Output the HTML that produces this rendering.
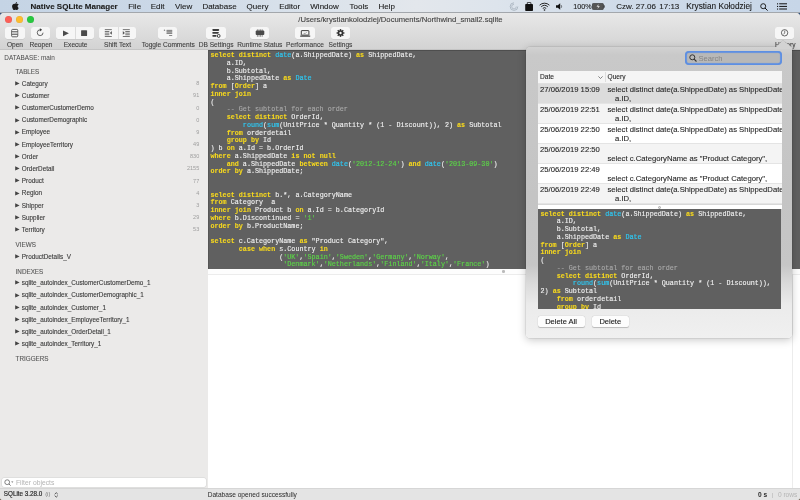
<!DOCTYPE html>
<html><head><meta charset="utf-8">
<style>
*{margin:0;padding:0;box-sizing:border-box}
html,body{width:800px;height:500px;overflow:hidden;background:linear-gradient(#34527a 0,#34527a 50%,#6b5a48 50%)}
body{position:relative;will-change:transform;font-family:"Liberation Sans",sans-serif;color:#222}
.a{position:absolute;white-space:nowrap}
#menubar{position:absolute;left:0;top:0;width:800px;height:12.5px;background:linear-gradient(to right,#c5d4e5 0%,#cbd8e7 20%,#dae2eb 38%,#e3e7ec 52%,#dde4ec 62%,#cfdbe9 78%,#c7d6e8 100%)}
#menubar .a{font-size:8px;line-height:12px;top:0.7px;color:#1a1a1a;-webkit-text-stroke:0.1px #1a1a1a}
#win{position:absolute;left:0;top:12.5px;width:800px;height:487.5px;background:#e0e0e0;border-radius:4px 4px 3px 3px;overflow:hidden}
#toolbar{position:absolute;left:0;top:0;width:800px;height:37px;background:linear-gradient(#e8e8e8,#d3d3d3);border-bottom:1px solid #c4c4c4}
.tl{position:absolute;top:3.2px;width:7px;height:7px;border-radius:50%;margin-left:0.2px;box-shadow:0 0 0 0.3px rgba(0,0,0,0.12) inset}
.btn{position:absolute;top:14.5px;height:12px;background:#f6f6f6;border-radius:2.5px;box-shadow:0 0.5px 0.5px rgba(0,0,0,0.12)}
.btn .dv{position:absolute;top:0;width:0.5px;height:12px;background:#dcdcdc}
.btn svg{position:absolute;left:0;top:0}
.lbl{position:absolute;top:28px;font-size:6.6px;line-height:8px;color:#404040;-webkit-text-stroke:0.1px #404040;white-space:nowrap}
#sidebar{position:absolute;left:0;top:37.5px;width:207.5px;height:438px;background:#ebeae9}
#sidebar .a{font-size:6.36px;line-height:8px;color:#262626}
#sidebar .i{left:21.8px;margin-top:0.5px;color:#383838;-webkit-text-stroke:0.1px #383838}
#sidebar .h{color:#5a5a5a;font-size:6.3px;left:15.6px;-webkit-text-stroke:0.12px #5a5a5a}
#sidebar .n{color:#9d9d9d;font-size:5.5px;text-align:right;right:8.3px}
#sidebar .t{position:absolute;left:15.8px;width:0;height:0;border-left:4.3px solid #444;border-top:2.2px solid transparent;border-bottom:2.2px solid transparent;margin-top:-0.2px;margin-left:-0.5px}
#filter{position:absolute;left:2px;top:427.5px;width:203.5px;height:9.3px;background:#fff;border-radius:2px;box-shadow:0 0 0 0.5px #d4d4d4}
#editor{position:absolute;left:207.5px;top:37.5px;width:592.5px;height:219px;background:#606060;border-left:1px solid #555;border-top:1px solid #4e4e4e;overflow:hidden}
pre{font-family:"Liberation Mono",monospace;font-size:6.745px;line-height:7.757px;color:#f2f2f2;-webkit-text-stroke:0.12px #f2f2f2;position:absolute;white-space:pre}
pre b{color:#f7d81e;-webkit-text-stroke:0.1px #f7d81e;font-weight:bold}
pre i{font-style:normal}
pre i.f{color:#2fc6f0;-webkit-text-stroke:0.2px #2fc6f0}
pre i.s{color:#5cd448;-webkit-text-stroke:0.15px #5cd448}
pre i.c{color:#ababab;-webkit-text-stroke:0.1px #ababab}
#split{position:absolute;left:207.5px;top:256.5px;width:592.5px;height:5.5px;background:#fdfdfd;border-bottom:0.8px solid #ececec}
#results{position:absolute;left:207.5px;top:262px;width:592.5px;height:213.5px;background:#fff}
#status{position:absolute;left:0;top:475.5px;width:800px;height:12px;background:#e4e4e4;border-top:1px solid #d6d6d6}
#status .a{font-size:6.58px;line-height:12px;top:-0.5px;color:#2a2a2a}
#pop{position:absolute;left:525.5px;top:46.5px;width:266px;height:291.5px;border-radius:4px 0 4px 4px;background:linear-gradient(#d2d2d2 0px,#c9c9c9 8px,#c4c4c4 150px,#c6c6c6 218px,#dadada 236px,#ebebeb 258px,#f0f0f0 292px);box-shadow:0 2px 8px rgba(0,0,0,0.22),0 0 0 0.5px rgba(0,0,0,0.12)}
#arrow{position:absolute;left:775.5px;top:39.5px}
#pop .a{font-size:7.7px;line-height:10px;color:#262626;-webkit-text-stroke:0.1px #262626}
#search{position:absolute;left:159px;top:4.3px;width:97.5px;height:14.3px;border-radius:4px;background:#b8b8b8;box-shadow:0 0 0 1.8px #5d8fe3 inset,0 0 0 2.3px rgba(93,143,227,0.25) inset}
#tbl{position:absolute;left:12px;top:24px;width:244px;height:133px;background:#fff;overflow:hidden}
.row{position:absolute;left:0;width:244px;height:20px;border-bottom:0.5px solid #e4e4e4}
#prev{position:absolute;left:12px;top:162px;width:243.5px;height:100px;background:#606060;overflow:hidden}
.pbtn{position:absolute;top:269.5px;height:10.8px;background:#fdfdfd;border-radius:2px;box-shadow:0 0.5px 0.8px rgba(0,0,0,0.2),0 0 0 0.3px rgba(0,0,0,0.08);font-size:7.5px;line-height:12.6px;text-align:center;color:#222;-webkit-text-stroke:0.12px #222}
</style></head><body>
<div id="menubar">
  <svg class="a" style="left:12.3px;top:1.6px" width="7" height="8.5" viewBox="0 0 16 19"><path d="M11.5 0c.1 1.2-.3 2.3-1 3.1-.7.8-1.7 1.4-2.8 1.3-.1-1.1.4-2.3 1.1-3C9.5.6 10.6.1 11.5 0zM14.8 6.2c-.1.1-2 1.2-2 3.5 0 2.7 2.4 3.6 2.5 3.7 0 .1-.4 1.3-1.3 2.6-.8 1.1-1.6 2.3-2.9 2.3s-1.6-.7-3-.7c-1.5 0-1.9.8-3.1.8S3 17.2 2.2 16.1C1.1 14.6.2 12 .2 9.6c0-3.9 2.5-5.9 5-5.9 1.3 0 2.4.9 3.2.9.8 0 2-.9 3.5-.9.6 0 2.6.1 3.9 2.5z" fill="#1b1b1b"/></svg>
  <div class="a" style="left:30.6px;font-weight:bold">Native SQLite Manager</div>
  <div class="a" style="left:128.2px">File</div>
  <div class="a" style="left:150.7px">Edit</div>
  <div class="a" style="left:175px">View</div>
  <div class="a" style="left:202.4px">Database</div>
  <div class="a" style="left:246.6px">Query</div>
  <div class="a" style="left:279.2px">Editor</div>
  <div class="a" style="left:310.3px">Window</div>
  <div class="a" style="left:349.6px">Tools</div>
  <div class="a" style="left:378.4px">Help</div>
  <!-- status icons -->
  <svg class="a" style="left:509px;top:2px" width="10" height="9" viewBox="0 0 10 9"><path d="M5 0.8A3.8 3.8 0 1 0 8.8 4.5" fill="none" stroke="#a9b4bf" stroke-width="0.9"/><path d="M5 2.3A2.3 2.3 0 1 0 7.3 4.5" fill="none" stroke="#a9b4bf" stroke-width="0.8"/></svg>
  <svg class="a" style="left:525.3px;top:1.8px" width="8.2" height="9" viewBox="0 0 8.2 9"><rect x="0.2" y="2" width="7.8" height="7" rx="0.8" fill="#111"/><rect x="2.3" y="0.4" width="3.6" height="2.4" rx="0.5" fill="none" stroke="#111" stroke-width="0.8"/></svg>
  <svg class="a" style="left:539.4px;top:2px" width="11" height="9" viewBox="0 0 11 9"><path d="M0.6 3.2A7 7 0 0 1 10.4 3.2" fill="none" stroke="#111" stroke-width="0.9"/><path d="M2.2 4.8A4.8 4.8 0 0 1 8.8 4.8" fill="none" stroke="#111" stroke-width="0.9"/><path d="M3.8 6.4A2.5 2.5 0 0 1 7.2 6.4" fill="none" stroke="#111" stroke-width="0.9"/><circle cx="5.5" cy="8" r="0.8" fill="#111"/></svg>
  <svg class="a" style="left:556px;top:3px" width="7" height="7" viewBox="0 0 7 7"><path d="M0 2.2H1.8L4.2 0.2V6.8L1.8 4.8H0Z" fill="#111"/><path d="M5.2 2.2Q6 3.5 5.2 4.8" fill="none" stroke="#111" stroke-width="0.6"/></svg>
  <div class="a" style="left:573.2px;font-size:7.2px">100%</div>
  <svg class="a" style="left:592px;top:3px" width="13" height="7" viewBox="0 0 13 7"><rect x="0.4" y="0.4" width="11" height="6.2" rx="1" fill="#555" stroke="#222" stroke-width="0.6"/><rect x="11.6" y="2.3" width="1" height="2.4" fill="#222"/><path d="M6.5 1L4.5 3.8H6.2L5.5 6L7.8 3H6.2Z" fill="#ddd"/></svg>
  <div class="a" style="left:616.3px">Czw. 27.06</div>
  <div class="a" style="left:659.3px">17:13</div>
  <div class="a" style="left:686.3px;font-size:8.25px">Krystian Kołodziej</div>
  <svg class="a" style="left:760px;top:2.5px" width="8" height="8" viewBox="0 0 8 8"><circle cx="3.2" cy="3.2" r="2.5" fill="none" stroke="#111" stroke-width="0.9"/><path d="M5 5L7.6 7.6" stroke="#111" stroke-width="1"/></svg>
  <svg class="a" style="left:777px;top:3px" width="10" height="7" viewBox="0 0 10 7"><g fill="#111"><rect x="0" y="0.3" width="1.1" height="1.1"/><rect x="0" y="2.9" width="1.1" height="1.1"/><rect x="0" y="5.5" width="1.1" height="1.1"/><rect x="2.2" y="0.3" width="7.8" height="1"/><rect x="2.2" y="2.9" width="7.8" height="1"/><rect x="2.2" y="5.5" width="7.8" height="1"/></g></svg>
</div>
<div class="a" style="left:0;top:11.7px;width:800px;height:1px;background:#a3a7ac"></div>
<div id="win">
  <div id="toolbar">
    <div class="tl" style="left:4.5px;background:#fc5f57"></div>
    <div class="tl" style="left:15.5px;background:#fdbc2e"></div>
    <div class="tl" style="left:26.5px;background:#28c840"></div>
    <div class="a" style="left:298.3px;top:3px;font-size:7.66px;line-height:8px;color:#404040;-webkit-text-stroke:0.1px #404040">/Users/krystiankolodziej/Documents/Northwind_small2.sqlite</div>
    <!-- Open -->
    <div class="btn" style="left:5px;width:19.5px"><svg width="19.5" height="12" viewBox="0 0 19.5 12"><rect x="6.65" y="2.4" width="6.1" height="7.4" rx="0.9" fill="none" stroke="#4f4f4f" stroke-width="0.9"/><path d="M6.8 4.6H12.6M6.8 7.5H12.6" stroke="#4f4f4f" stroke-width="0.8"/><rect x="7.1" y="5" width="5.2" height="2.1" fill="#c4c4c4"/></svg></div>
    <!-- Reopen -->
    <div class="btn" style="left:30.7px;width:19.3px"><svg width="19.3" height="12" viewBox="0 0 19.3 12"><path d="M12.05 5.7A2.9 2.9 0 1 1 9.15 2.8" fill="none" stroke="#4a4a4a" stroke-width="0.85"/><path d="M8.9 1.2L11.1 2.8L8.9 4.4Z" fill="#3a3a3a"/></svg></div>
    <!-- Execute -->
    <div class="btn" style="left:56px;width:37.7px"><div class="dv" style="left:19.3px"></div><svg width="37.7" height="12" viewBox="0 0 37.7 12"><path d="M7 3.5L12.9 6.35L7 9.2Z" fill="#4a4a4a"/><rect x="25.1" y="3.3" width="6" height="5.7" rx="0.5" fill="#4a4a4a"/></svg></div>
    <!-- Shift Text -->
    <div class="btn" style="left:99.2px;width:37.3px"><div class="dv" style="left:18.6px"></div><svg width="37.3" height="12" viewBox="0 0 37.3 12"><g fill="#555"><rect x="5.8" y="2.3" width="7" height="0.8"/><rect x="5.8" y="4" width="4.5" height="0.8"/><rect x="5.8" y="5.7" width="4.5" height="0.8"/><rect x="5.8" y="7.4" width="4.5" height="0.8"/><rect x="5.8" y="9" width="7" height="0.8"/><path d="M12.9 4L10.8 5.9L12.9 7.8Z"/></g><g fill="#555"><rect x="23.8" y="2.3" width="7" height="0.8"/><rect x="26.3" y="4" width="4.5" height="0.8"/><rect x="26.3" y="5.7" width="4.5" height="0.8"/><rect x="26.3" y="7.4" width="4.5" height="0.8"/><rect x="23.8" y="9" width="7" height="0.8"/><path d="M23.8 4L25.9 5.9L23.8 7.8Z"/></g></svg></div>
    <!-- Toggle Comments -->
    <div class="btn" style="left:157.8px;width:19.7px"><svg width="19.7" height="12" viewBox="0 0 19.7 12"><circle cx="6.5" cy="3.3" r="0.75" fill="#888"/><rect x="8.6" y="2.9" width="5.6" height="3.9" fill="#b0b0b0"/><g fill="#7a7a7a"><rect x="8.6" y="2.9" width="5.6" height="0.8"/><rect x="8.6" y="4.5" width="5.6" height="0.7"/><rect x="8.6" y="6" width="5.6" height="0.8"/><rect x="11.1" y="8" width="3.1" height="0.9"/></g></svg></div>
    <!-- DB Settings -->
    <div class="btn" style="left:206px;width:19.5px"><svg width="19.5" height="12" viewBox="0 0 19.5 12"><g fill="#3c3c3c"><rect x="6.3" y="1.9" width="6.9" height="2" rx="0.8"/><path d="M7.1 5H13L12 6.7H7.1A0.85 0.85 0 0 1 7.1 5Z"/><rect x="6.3" y="8" width="4.3" height="1.8" rx="0.8"/></g><ellipse cx="12.7" cy="8.9" rx="1.35" ry="1.55" fill="none" stroke="#3c3c3c" stroke-width="0.95"/></svg></div>
    <!-- Runtime Status -->
    <div class="btn" style="left:249.6px;width:19.6px"><svg width="19.6" height="12" viewBox="0 0 19.6 12"><g fill="#8e8e8e"><rect x="6.9" y="2.3" width="1" height="7.5"/><rect x="8.5" y="2.3" width="1" height="7.5"/><rect x="10.1" y="2.3" width="1" height="7.5"/><rect x="11.7" y="2.3" width="1" height="7.5"/></g><rect x="5.7" y="3.5" width="8.6" height="4.6" rx="1" fill="#4a4a4a"/></svg></div>
    <!-- Performance -->
    <div class="btn" style="left:295px;width:20px"><svg width="20" height="12" viewBox="0 0 20 12"><rect x="6.3" y="3.6" width="7.6" height="4.5" rx="0.4" fill="none" stroke="#3e3e3e" stroke-width="1"/><path d="M5.2 9.1H15.2" stroke="#444" stroke-width="1.1"/><path d="M8.6 6.4H10.4L11.6 5.2" fill="none" stroke="#666" stroke-width="0.6"/></svg></div>
    <!-- Settings -->
    <div class="btn" style="left:331px;width:19px"><svg width="19" height="12" viewBox="0 0 19 12"><g transform="translate(9.5 6)"><circle r="2.7" fill="#333"/><g fill="#333"><rect x="-0.75" y="-3.9" width="1.5" height="7.8"/><rect x="-0.75" y="-3.9" width="1.5" height="7.8" transform="rotate(45)"/><rect x="-0.75" y="-3.9" width="1.5" height="7.8" transform="rotate(90)"/><rect x="-0.75" y="-3.9" width="1.5" height="7.8" transform="rotate(135)"/></g><circle r="1.2" fill="#f6f6f6"/></g></svg></div>
    <!-- History -->
    <div class="btn" style="left:775.2px;width:19.2px"><svg width="19.2" height="12" viewBox="0 0 19.2 12"><circle cx="9.6" cy="5.8" r="3.2" fill="none" stroke="#444" stroke-width="0.8"/><path d="M9.7 3.6V5.9L8.6 7.3" fill="none" stroke="#444" stroke-width="0.7"/></svg></div>
    <div class="lbl" style="left:6.9px">Open</div>
    <div class="lbl" style="left:29.4px">Reopen</div>
    <div class="lbl" style="left:63.7px">Execute</div>
    <div class="lbl" style="left:104px">Shift Text</div>
    <div class="lbl" style="left:141.7px">Toggle Comments</div>
    <div class="lbl" style="left:198.7px">DB Settings</div>
    <div class="lbl" style="left:237.3px">Runtime Status</div>
    <div class="lbl" style="left:286.1px">Performance</div>
    <div class="lbl" style="left:328.6px">Settings</div>
    <div class="lbl" style="left:775px">History</div>
  </div>
  <div id="sidebar">
<div class="a" style="left:4.3px;top:3.6px;font-size:6.4px;color:#4a4a4a">DATABASE: main</div>
<div class="a h" style="top:18.00px">TABLES</div>
<svg class="a" style="left:15.1px;top:31.10px" width="5" height="5" viewBox="0 0 5 5"><path d="M0.2 0.3L4.6 2.45L0.2 4.6Z" fill="#444"/></svg>
<div class="a i" style="top:29.30px">Category</div>
<div class="a n" style="top:29.30px">8</div>
<svg class="a" style="left:15.1px;top:43.27px" width="5" height="5" viewBox="0 0 5 5"><path d="M0.2 0.3L4.6 2.45L0.2 4.6Z" fill="#444"/></svg>
<div class="a i" style="top:41.47px">Customer</div>
<div class="a n" style="top:41.47px">91</div>
<svg class="a" style="left:15.1px;top:55.44px" width="5" height="5" viewBox="0 0 5 5"><path d="M0.2 0.3L4.6 2.45L0.2 4.6Z" fill="#444"/></svg>
<div class="a i" style="top:53.64px">CustomerCustomerDemo</div>
<div class="a n" style="top:53.64px">0</div>
<svg class="a" style="left:15.1px;top:67.61px" width="5" height="5" viewBox="0 0 5 5"><path d="M0.2 0.3L4.6 2.45L0.2 4.6Z" fill="#444"/></svg>
<div class="a i" style="top:65.81px">CustomerDemographic</div>
<div class="a n" style="top:65.81px">0</div>
<svg class="a" style="left:15.1px;top:79.78px" width="5" height="5" viewBox="0 0 5 5"><path d="M0.2 0.3L4.6 2.45L0.2 4.6Z" fill="#444"/></svg>
<div class="a i" style="top:77.98px">Employee</div>
<div class="a n" style="top:77.98px">9</div>
<svg class="a" style="left:15.1px;top:91.95px" width="5" height="5" viewBox="0 0 5 5"><path d="M0.2 0.3L4.6 2.45L0.2 4.6Z" fill="#444"/></svg>
<div class="a i" style="top:90.15px">EmployeeTerritory</div>
<div class="a n" style="top:90.15px">49</div>
<svg class="a" style="left:15.1px;top:104.12px" width="5" height="5" viewBox="0 0 5 5"><path d="M0.2 0.3L4.6 2.45L0.2 4.6Z" fill="#444"/></svg>
<div class="a i" style="top:102.32px">Order</div>
<div class="a n" style="top:102.32px">830</div>
<svg class="a" style="left:15.1px;top:116.29px" width="5" height="5" viewBox="0 0 5 5"><path d="M0.2 0.3L4.6 2.45L0.2 4.6Z" fill="#444"/></svg>
<div class="a i" style="top:114.49px">OrderDetail</div>
<div class="a n" style="top:114.49px">2155</div>
<svg class="a" style="left:15.1px;top:128.46px" width="5" height="5" viewBox="0 0 5 5"><path d="M0.2 0.3L4.6 2.45L0.2 4.6Z" fill="#444"/></svg>
<div class="a i" style="top:126.66px">Product</div>
<div class="a n" style="top:126.66px">77</div>
<svg class="a" style="left:15.1px;top:140.63px" width="5" height="5" viewBox="0 0 5 5"><path d="M0.2 0.3L4.6 2.45L0.2 4.6Z" fill="#444"/></svg>
<div class="a i" style="top:138.83px">Region</div>
<div class="a n" style="top:138.83px">4</div>
<svg class="a" style="left:15.1px;top:152.80px" width="5" height="5" viewBox="0 0 5 5"><path d="M0.2 0.3L4.6 2.45L0.2 4.6Z" fill="#444"/></svg>
<div class="a i" style="top:151.00px">Shipper</div>
<div class="a n" style="top:151.00px">3</div>
<svg class="a" style="left:15.1px;top:164.97px" width="5" height="5" viewBox="0 0 5 5"><path d="M0.2 0.3L4.6 2.45L0.2 4.6Z" fill="#444"/></svg>
<div class="a i" style="top:163.17px">Supplier</div>
<div class="a n" style="top:163.17px">29</div>
<svg class="a" style="left:15.1px;top:177.14px" width="5" height="5" viewBox="0 0 5 5"><path d="M0.2 0.3L4.6 2.45L0.2 4.6Z" fill="#444"/></svg>
<div class="a i" style="top:175.34px">Territory</div>
<div class="a n" style="top:175.34px">53</div>
<div class="a h" style="top:191.00px">VIEWS</div>
<svg class="a" style="left:15.1px;top:204.10px" width="5" height="5" viewBox="0 0 5 5"><path d="M0.2 0.3L4.6 2.45L0.2 4.6Z" fill="#444"/></svg>
<div class="a i" style="top:202.30px">ProductDetails_V</div>
<div class="a h" style="top:217.50px">INDEXES</div>
<svg class="a" style="left:15.1px;top:230.40px" width="5" height="5" viewBox="0 0 5 5"><path d="M0.2 0.3L4.6 2.45L0.2 4.6Z" fill="#444"/></svg>
<div class="a i" style="top:228.60px">sqlite_autoindex_CustomerCustomerDemo_1</div>
<svg class="a" style="left:15.1px;top:242.60px" width="5" height="5" viewBox="0 0 5 5"><path d="M0.2 0.3L4.6 2.45L0.2 4.6Z" fill="#444"/></svg>
<div class="a i" style="top:240.80px">sqlite_autoindex_CustomerDemographic_1</div>
<svg class="a" style="left:15.1px;top:254.80px" width="5" height="5" viewBox="0 0 5 5"><path d="M0.2 0.3L4.6 2.45L0.2 4.6Z" fill="#444"/></svg>
<div class="a i" style="top:253.00px">sqlite_autoindex_Customer_1</div>
<svg class="a" style="left:15.1px;top:267.00px" width="5" height="5" viewBox="0 0 5 5"><path d="M0.2 0.3L4.6 2.45L0.2 4.6Z" fill="#444"/></svg>
<div class="a i" style="top:265.20px">sqlite_autoindex_EmployeeTerritory_1</div>
<svg class="a" style="left:15.1px;top:279.20px" width="5" height="5" viewBox="0 0 5 5"><path d="M0.2 0.3L4.6 2.45L0.2 4.6Z" fill="#444"/></svg>
<div class="a i" style="top:277.40px">sqlite_autoindex_OrderDetail_1</div>
<svg class="a" style="left:15.1px;top:291.40px" width="5" height="5" viewBox="0 0 5 5"><path d="M0.2 0.3L4.6 2.45L0.2 4.6Z" fill="#444"/></svg>
<div class="a i" style="top:289.60px">sqlite_autoindex_Territory_1</div>
<div class="a h" style="top:305.20px">TRIGGERS</div>
    <div id="filter"><svg class="a" style="left:2px;top:1.3px" width="10" height="7" viewBox="0 0 10 7"><circle cx="3.2" cy="3.2" r="2.4" fill="none" stroke="#666" stroke-width="0.8"/><path d="M4.9 4.9L6.6 6.6" stroke="#666" stroke-width="0.9"/><path d="M7.2 2.6H9.4L8.3 3.8Z" fill="#666"/></svg><div class="a" style="left:14px;top:0;font-size:6.75px;line-height:9.3px;color:#b4b4b4">Filter objects</div></div>
  </div>
  <div id="editor">
    <pre style="left:2px;top:1px"><b>select</b> <b>distinct</b> <i class="f">date</i>(a.ShippedDate) <b>as</b> ShippedDate,
    a.ID,
    b.Subtotal,
    a.ShippedDate <b>as</b> <i class="f">Date</i>
<b>from</b> [<b>Order</b>] a
<b>inner</b> <b>join</b>
(
    <i class="c">-- Get subtotal for each order</i>
    <b>select</b> <b>distinct</b> OrderId,
        <i class="f">round</i>(<i class="f">sum</i>(UnitPrice * Quantity * (1 - Discount)), 2) <b>as</b> Subtotal
    <b>from</b> orderdetail
    <b>group</b> <b>by</b> Id
) b <b>on</b> a.Id = b.OrderId
<b>where</b> a.ShippedDate <b>is</b> <b>not</b> <b>null</b>
    <b>and</b> a.ShippedDate <b>between</b> <i class="f">date</i>(<i class="s">&#x27;2012-12-24&#x27;</i>) <b>and</b> <i class="f">date</i>(<i class="s">&#x27;2013-09-30&#x27;</i>)
<b>order</b> <b>by</b> a.ShippedDate;


<b>select</b> <b>distinct</b> b.*, a.CategoryName
<b>from</b> Category  a
<b>inner</b> <b>join</b> Product b <b>on</b> a.Id = b.CategoryId
<b>where</b> b.Discontinued = <i class="s">&#x27;1&#x27;</i>
<b>order</b> <b>by</b> b.ProductName;

<b>select</b> c.CategoryName <b>as</b> &quot;Product Category&quot;,
       <b>case</b> <b>when</b> s.Country <b>in</b>
                 (<i class="s">&#x27;UK&#x27;</i>,<i class="s">&#x27;Spain&#x27;</i>,<i class="s">&#x27;Sweden&#x27;</i>,<i class="s">&#x27;Germany&#x27;</i>,<i class="s">&#x27;Norway&#x27;</i>,
                  <i class="s">&#x27;Denmark&#x27;</i>,<i class="s">&#x27;Netherlands&#x27;</i>,<i class="s">&#x27;Finland&#x27;</i>,<i class="s">&#x27;Italy&#x27;</i>,<i class="s">&#x27;France&#x27;</i>)
            <b>when</b> <i class="s">&#x27;USA&#x27;</i> <b>then</b> <i class="s">&#x27;NA&#x27;</i></pre>
  </div>
  <div id="split"><div class="a" style="left:294.5px;top:1.2px;width:2.6px;height:2.6px;border-radius:50%;background:#bbb"></div></div>
  <div id="results"><div class="a" style="left:584px;top:0;width:0.5px;height:214px;background:#ececec"></div></div>
  <div id="status">
    <div class="a" style="left:3.8px;top:-0.8px;font-size:6.3px;color:#2e2e2e;-webkit-text-stroke:0.2px #2e2e2e">SQLite 3.28.0</div>
    <div class="a" style="left:207.7px">Database opened successfully</div>
    <div class="a" style="left:45.2px;top:-0.8px;font-size:5.8px;color:#777">(i)</div>
    <svg class="a" style="left:54px;top:3px" width="4.5" height="6" viewBox="0 0 4.5 6"><path d="M0.7 2.2L2.25 0.7L3.8 2.2M0.7 3.6L2.25 5.1L3.8 3.6" fill="none" stroke="#333" stroke-width="0.8"/></svg>
    <div class="a" style="left:758px;font-weight:bold">0 s</div>
    <div class="a" style="left:772px;width:0.6px;height:5px;top:4px;background:#c8c8c8"></div>
    <div class="a" style="left:777.9px;color:#b5b5b5">0 rows</div>
  </div>
</div>
<div id="pop">
  <div id="search"><svg class="a" style="left:4.3px;top:3.6px" width="8" height="8" viewBox="0 0 8 8"><circle cx="3.3" cy="3.3" r="2.5" fill="none" stroke="#333" stroke-width="1"/><path d="M5.1 5.1L7.5 7.5" stroke="#333" stroke-width="1.1"/></svg><div class="a" style="left:14px;top:3px;font-size:7.6px;line-height:10px;color:#858585;-webkit-text-stroke:0px">Search</div></div>
  <div id="tbl">
<div class="row" style="top:0;height:13.3px;background:#f5f5f5;border-bottom:0.5px solid #e0e0e0"><div class="a" style="left:2.5px;top:1.2px;font-size:6.6px;line-height:10px">Date</div><svg class="a" style="left:60.5px;top:5px" width="5" height="3" viewBox="0 0 5 3"><path d="M0.4 0.4L2.5 2.5L4.6 0.4" fill="none" stroke="#555" stroke-width="0.7"/></svg><div class="a" style="left:67.5px;top:1px;width:0.5px;height:10.5px;background:#ddd"></div><div class="a" style="left:70px;top:1.2px;font-size:6.6px;line-height:10px">Query</div></div>
<div class="row" style="top:13.30px;background:#dcdcdc"><div class="a" style="left:2.5px;top:1.2px">27/06/2019 15:09</div><div class="a" style="left:70px;top:1.2px">select distinct date(a.ShippedDate) as ShippedDate</div><div class="a" style="left:77.5px;top:10.7px">a.ID,</div></div>
<div class="row" style="top:33.25px;background:#f4f4f4"><div class="a" style="left:2.5px;top:1.2px">25/06/2019 22:51</div><div class="a" style="left:70px;top:1.2px">select distinct date(a.ShippedDate) as ShippedDate</div><div class="a" style="left:77.5px;top:10.7px">a.ID,</div></div>
<div class="row" style="top:53.20px;background:#ffffff"><div class="a" style="left:2.5px;top:1.2px">25/06/2019 22:50</div><div class="a" style="left:70px;top:1.2px">select distinct date(a.ShippedDate) as ShippedDate</div><div class="a" style="left:77.5px;top:10.7px">a.ID,</div></div>
<div class="row" style="top:73.15px;background:#f4f4f4"><div class="a" style="left:2.5px;top:1.2px">25/06/2019 22:50</div><div class="a" style="left:70px;top:10.7px">select c.CategoryName as &quot;Product Category&quot;,</div></div>
<div class="row" style="top:93.10px;background:#ffffff"><div class="a" style="left:2.5px;top:1.2px">25/06/2019 22:49</div><div class="a" style="left:70px;top:10.7px">select c.CategoryName as &quot;Product Category&quot;,</div></div>
<div class="row" style="top:113.05px;background:#f4f4f4"><div class="a" style="left:2.5px;top:1.2px">25/06/2019 22:49</div><div class="a" style="left:70px;top:1.2px">select distinct date(a.ShippedDate) as ShippedDate</div><div class="a" style="left:77.5px;top:10.7px">a.ID,</div></div>
  </div>
  <div class="a" style="left:12px;top:157px;width:244px;height:5.5px;background:#fff;border-top:0.5px solid #d8d8d8"><div class="a" style="left:120.5px;top:1.2px;width:3px;height:3px;border-radius:50%;border:0.6px solid #aaa;background:#ddd"></div></div>
  <div id="prev"><pre style="left:3px;top:2px"><b>select</b> <b>distinct</b> <i class="f">date</i>(a.ShippedDate) <b>as</b> ShippedDate,
    a.ID,
    b.Subtotal,
    a.ShippedDate <b>as</b> <i class="f">Date</i>
<b>from</b> [<b>Order</b>] a
<b>inner</b> <b>join</b>
(
    <i class="c">-- Get subtotal for each order</i>
    <b>select</b> <b>distinct</b> OrderId,
        <i class="f">round</i>(<i class="f">sum</i>(UnitPrice * Quantity * (1 - Discount)),
2) <b>as</b> Subtotal
    <b>from</b> orderdetail
    <b>group</b> <b>by</b> Id
) b <b>on</b> a.Id = b.OrderId</pre></div>
  <div class="pbtn" style="left:12px;width:47px">Delete All</div>
  <div class="pbtn" style="left:66px;width:37.5px">Delete</div>
</div>
<svg id="arrow" width="17" height="9" viewBox="0 0 17 9"><path d="M-0.5 7.6L6.8 0L16.3 7.6V9H-0.5Z" fill="#d3d3d3"/><path d="M-0.5 7.6L6.8 0L16.3 7.6" fill="none" stroke="rgba(0,0,0,0.13)" stroke-width="0.5"/></svg>
</body></html>
